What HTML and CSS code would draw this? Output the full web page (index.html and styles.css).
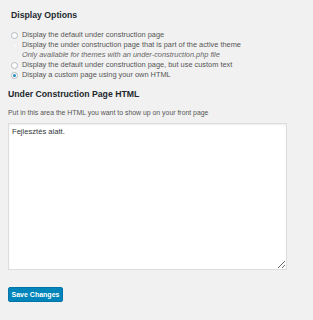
FILE: index.html
```
<!DOCTYPE html>
<html lang="en">
<head>
<meta charset="UTF-8">
<meta name="viewport" content="width=device-width, initial-scale=1.0">
<title>Under Construction</title>
<link rel="stylesheet" href="styles.css">
</head>
<body>
<div class="wrap">
  <h2 class="section-title first">Display Options</h2>
  <fieldset class="options">
    <label class="option"><input type="radio" name="display" value="0"> Display the default under construction page</label>
    <label class="option disabled"><input type="radio" name="display" value="1" disabled> Display the under construction page that is part of the active theme</label>
    <div class="note">Only available for themes with an under-construction.php file</div>
    <label class="option"><input type="radio" name="display" value="2"> Display the default under construction page, but use custom text</label>
    <label class="option"><input type="radio" name="display" value="3" checked> Display a custom page using your own HTML</label>
  </fieldset>

  <h2 class="section-title">Under Construction Page HTML</h2>
  <p class="hint">Put in this area the HTML you want to show up on your front page</p>
  <textarea class="html-box">Fejlesztés alatt.</textarea>

  <div class="actions">
    <button class="button-primary">Save Changes</button>
  </div>
</div>
</body>
</html>
```

FILE: styles.css
```
body {
  margin: 0;
  padding: 0;
  background-color: #f1f1f1;
  color: #555;
  font-family: 'Liberation Sans', Arial, sans-serif;
  font-size: 7.4px;
}
.wrap {
  padding: 9px 0 0 8px;
}
.section-title {
  margin: 0;
  font-size: 8.7px;
  line-height: 12px;
  font-weight: bold;
  color: #23282d;
}
.section-title.first {
  padding-left: 3px;
}
.options {
  border: none;
  margin: 9px 0 0 0;
  padding: 0 0 0 3px;
}
.option {
  display: flex;
  align-items: center;
  height: 10px;
  line-height: 10px;
}
.option input {
  -webkit-appearance: none;
  appearance: none;
  width: 7px;
  height: 7px;
  margin: 0 4px 0 0;
  border: 1px solid #b4b9be;
  border-radius: 50%;
  background-color: #fff;
  box-sizing: border-box;
  position: relative;
}
.option input:checked::before {
  content: '';
  position: absolute;
  top: 1px;
  left: 1px;
  width: 3px;
  height: 3px;
  border-radius: 50%;
  background-color: #1e8cbe;
}
.option.disabled input {
  border-color: #ececec;
  background-color: #f4f4f4;
}
.note {
  height: 10px;
  line-height: 10px;
  padding-left: 11px;
  font-style: italic;
  color: #666;
}
.options + .section-title {
  margin-top: 8px;
}
.section-title + .hint {
  margin-top: 7px;
}
.hint {
  margin: 0;
  line-height: 11px;
  font-size: 6.9px;
}
.html-box {
  display: block;
  box-sizing: border-box;
  width: 279px;
  height: 147px;
  margin-top: 5px;
  padding: 3px 3px;
  border: 1px solid #ddd;
  background-color: #fff;
  color: #32373c;
  font-family: 'Liberation Sans', Arial, sans-serif;
  font-size: 7.6px;
  resize: vertical;
  box-shadow: inset 0 1px 2px rgba(0, 0, 0, 0.07);
}
.actions {
  margin-top: 17px;
}
.button-primary {
  height: 15px;
  width: 55px;
  padding: 0;
  border: 1px solid #0073aa;
  border-radius: 2px;
  background-color: #0085ba;
  color: #fff;
  font-family: 'Liberation Sans', Arial, sans-serif;
  font-size: 7px;
  font-weight: bold;
  cursor: pointer;
}
```
